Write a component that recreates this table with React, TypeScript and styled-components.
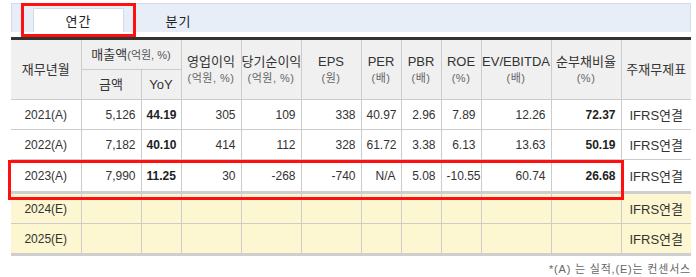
import React from "react";
import styled, { createGlobalStyle } from "styled-components";

const GlobalStyle = createGlobalStyle`
    body {
        margin: 0;
        background: #fff;
        font-family: "Liberation Sans", "Noto Sans CJK KR", sans-serif;
        color: #333;
    }
`;

type Row = {
    year: string;
    values: string[];
    estimate?: boolean;
};

const rows: Row[] = [
    { year: "2021(A)", values: ["5,126", "44.19", "305", "109", "338", "40.97", "2.96", "7.89", "12.26", "72.37"] },
    { year: "2022(A)", values: ["7,182", "40.10", "414", "112", "328", "61.72", "3.38", "6.13", "13.63", "50.19"] },
    { year: "2023(A)", values: ["7,990", "11.25", "30", "-268", "-740", "N/A", "5.08", "-10.55", "60.74", "26.68"] },
    { year: "2024(E)", values: Array(10).fill(""), estimate: true },
    { year: "2025(E)", values: Array(10).fill(""), estimate: true },
];

const widths = [70, 60, 40, 60, 60, 60, 40, 40, 40, 70, 70, 70];
const boldCols = [1, 9];

const App = () => {
    return (
        <Page>
            <GlobalStyle />
            <TabBar>
                <Tab active>연간</Tab>
                <Tab>분기</Tab>
            </TabBar>
            <Table>
                <colgroup>
                    {widths.map((w, i) => (
                        <col key={i} style={{ width: w }} />
                    ))}
                </colgroup>
                <thead>
                    <tr>
                        <Th rowSpan={2} first>재무년월</Th>
                        <Th colSpan={2}>
                            매출액<Unit>(억원, %)</Unit>
                        </Th>
                        <Th rowSpan={2}>
                            영업이익<Sub>(억원, %)</Sub>
                        </Th>
                        <Th rowSpan={2}>
                            당기순이익<Sub>(억원, %)</Sub>
                        </Th>
                        <Th rowSpan={2}>
                            EPS<Sub>(원)</Sub>
                        </Th>
                        <Th rowSpan={2}>
                            PER<Sub>(배)</Sub>
                        </Th>
                        <Th rowSpan={2}>
                            PBR<Sub>(배)</Sub>
                        </Th>
                        <Th rowSpan={2}>
                            ROE<Sub>(%)</Sub>
                        </Th>
                        <Th rowSpan={2}>
                            EV/EBITDA<Sub>(배)</Sub>
                        </Th>
                        <Th rowSpan={2}>
                            순부채비율<Sub>(%)</Sub>
                        </Th>
                        <Th rowSpan={2} last>주재무제표</Th>
                    </tr>
                    <tr>
                        <Th>금액</Th>
                        <Th>YoY</Th>
                    </tr>
                </thead>
                <tbody>
                    {rows.map((row, r) => (
                        <BodyRow key={row.year} estimate={row.estimate} divider={r === 2} closing={r === rows.length - 1}>
                            <YearCell>{row.year}</YearCell>
                            {row.values.map((v, i) => (
                                <NumCell key={i} bold={boldCols.includes(i)}>
                                    {v}
                                </NumCell>
                            ))}
                            <TypeCell>IFRS연결</TypeCell>
                        </BodyRow>
                    ))}
                </tbody>
            </Table>
            <Note>*(A) 는 실적,(E)는 컨센서스</Note>
            <Highlight style={{ left: 10, top: 3, width: 115, height: 34 }} />
            <Highlight style={{ left: -3, top: 160, width: 616, height: 40 }} />
        </Page>
    );
};

const Page = styled.div`
    position: relative;
    width: 680px;
    margin-left: 11px;
    padding-top: 3px;
`;

const TabBar = styled.div`
    display: flex;
    gap: 9px;
    height: 29px;
    box-sizing: border-box;
    padding: 4px 0 0 21px;
    background: #e8eef8;
    border: 1px solid #d3dbe7;
    border-bottom: none;
`;

const Tab = styled.div<{ active?: boolean }>`
    width: 91px;
    height: 24px;
    box-sizing: border-box;
    display: flex;
    align-items: center;
    justify-content: center;
    font-size: 13px;
    letter-spacing: 1px;
    color: #222;
    background: ${(p) => (p.active ? "#fff" : "transparent")};
    border: 1px solid ${(p) => (p.active ? "#d3dbe7" : "transparent")};
    border-bottom: none;
`;

const Table = styled.table`
    margin-top: 5px;
    width: 680px;
    table-layout: fixed;
    border-collapse: collapse;
    border-top: 3px solid #333;
    font-size: 12px;
`;

const Th = styled.th<{ first?: boolean; last?: boolean }>`
    background: #f0f0f0;
    font-weight: normal;
    font-size: 13px;
    color: #333;
    height: 29px;
    padding: 0;
    line-height: 16px;
    border: 1px solid #cccccc;
    border-left: ${(p) => (p.first ? "none" : "1px solid #cccccc")};
    border-right: ${(p) => (p.last ? "none" : "1px solid #cccccc")};
    white-space: nowrap;
`;

const Unit = styled.span`
    font-size: 11px;
    color: #555;
`;

const Sub = styled.span`
    display: block;
    font-size: 11px;
    color: #666;
    letter-spacing: 0.5px;
`;

const BodyRow = styled.tr<{ estimate?: boolean; divider?: boolean; closing?: boolean }>`
    height: 30px;
    background: ${(p) => (p.estimate ? "#fcf7d0" : "#fff")};
    border-bottom: ${(p) => (p.divider || p.closing ? "3px solid #cfcfcf" : "1px solid #cccccc")};
    td {
        height: ${(p) => (p.divider ? "31px" : "29px")};
    }
`;

const Cell = styled.td`
    padding: 0 5px;
    border-left: 1px solid #cccccc;
    color: #333;
    white-space: nowrap;
`;

const YearCell = styled(Cell)`
    border-left: none;
    text-align: center;
    font-size: 12px;
`;

const NumCell = styled(Cell)<{ bold?: boolean }>`
    text-align: right;
    font-weight: ${(p) => (p.bold ? "bold" : "normal")};
    color: ${(p) => (p.bold ? "#222" : "#333")};
`;

const TypeCell = styled(Cell)`
    text-align: center;
    font-size: 13px;
`;

const Note = styled.div`
    text-align: right;
    font-size: 11px;
    letter-spacing: 0.8px;
    color: #666;
    margin-top: 4px;
`;

const Highlight = styled.div`
    position: absolute;
    box-sizing: border-box;
    border: 3px solid #ff1010;
    pointer-events: none;
`;

export default App;
